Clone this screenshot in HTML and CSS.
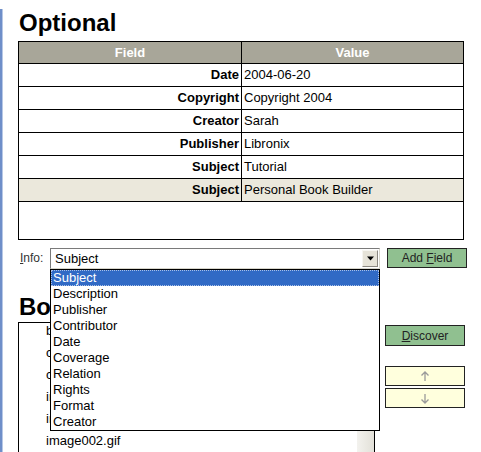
FILE: index.html
```html
<!DOCTYPE html>
<html>
<head>
<meta charset="utf-8">
<title>Optional</title>
<link rel="stylesheet" href="styles.css">
</head>
<body>
<div class="page">
  <h1 class="title">Optional</h1>
  <table class="meta">
    <thead>
      <tr><th class="col-field">Field</th><th class="col-value">Value</th></tr>
    </thead>
    <tbody>
      <tr><td class="f">Date</td><td class="v">2004-06-20</td></tr>
      <tr><td class="f">Copyright</td><td class="v">Copyright 2004</td></tr>
      <tr><td class="f">Creator</td><td class="v">Sarah</td></tr>
      <tr><td class="f">Publisher</td><td class="v">Libronix</td></tr>
      <tr><td class="f">Subject</td><td class="v">Tutorial</td></tr>
      <tr class="current"><td class="f">Subject</td><td class="v">Personal Book Builder</td></tr>
      <tr class="spacer"><td colspan="2"></td></tr>
    </tbody>
  </table>

  <div class="info-row">
    <label class="info-label"><u>I</u>nfo:</label>
    <div class="combo">
      <div class="combo-box">
        <span class="combo-text">Subject</span>
        <span class="combo-btn"><svg width="9" height="5" viewBox="0 0 9 5"><path d="M1 0.5 H8 L4.5 4.5 Z" fill="#000"/></svg></span>
      </div>
      <ul class="combo-list">
        <li class="hl">Subject</li>
        <li>Description</li>
        <li>Publisher</li>
        <li>Contributor</li>
        <li>Date</li>
        <li>Coverage</li>
        <li>Relation</li>
        <li>Rights</li>
        <li>Format</li>
        <li>Creator</li>
      </ul>
    </div>
    <button class="btn green add"><span>Add <u>F</u>ield</span></button>
  </div>

  <h2 class="title section">Book Files</h2>
  <div class="files-row">
    <div class="listbox">
      <ul class="files">
        <li>book.htm</li>
        <li>contents.htm</li>
        <li>chapter1.htm</li>
        <li>image000.gif</li>
        <li>image001.gif</li>
        <li>image002.gif</li>
      </ul>
      <div class="scroll"></div>
    </div>
    <div class="side">
      <button class="btn green discover"><span><u>D</u>iscover</span></button>
      <button class="btn yellow up"><svg width="10" height="11" viewBox="0 0 10 11"><path d="M5 1 V10 M1.5 4.5 L5 1 L8.5 4.5" fill="none" stroke="#9a9a9a" stroke-width="1.3"/></svg></button>
      <button class="btn yellow down"><svg width="10" height="11" viewBox="0 0 10 11"><path d="M5 1 V10 M1.5 6.5 L5 10 L8.5 6.5" fill="none" stroke="#9a9a9a" stroke-width="1.3"/></svg></button>
    </div>
  </div>
</div>
</body>
</html>
```

FILE: styles.css
```css
html, body {
  margin: 0;
  padding: 0;
  background: #fff;
}
body {
  width: 481px;
  height: 452px;
  overflow: hidden;
  font-family: "Liberation Sans", Arial, sans-serif;
  font-size: 13px;
  color: #000;
}
.page {
  height: 452px;
  border-left: 2px solid #6f8fc9;
  box-shadow: inset 1px 0 0 #b7c8e6;
  padding-left: 16px;
  box-sizing: border-box;
}
.title {
  font-size: 24px;
  font-weight: bold;
  line-height: 28px;
  margin: 9px 0 4px 1px;
}
.meta {
  border-collapse: collapse;
  width: 446px;
  table-layout: fixed;
}
.meta th, .meta td {
  border: 1px solid #000;
  padding: 0 2px;
  height: 22px;
  line-height: 18px;
  white-space: nowrap;
  overflow: hidden;
}
.meta th {
  background: #a8a699;
  color: #fff;
  font-weight: bold;
  text-align: center;
  height: 21px;
}
.col-field { width: 218px; }
.meta td.f {
  font-weight: bold;
  text-align: right;
}
.meta td.v {
  text-align: left;
}
.meta tr.current td {
  background: #ebe8dc;
}
.meta tr.spacer td {
  height: 37px;
}
.info-row {
  display: flex;
  align-items: flex-start;
  margin-top: 8px;
}
.info-label {
  font-size: 12px;
  color: #333;
  width: 30px;
  padding-left: 2px;
  line-height: 20px;
}
.combo {
  position: relative;
  width: 330px;
}
.combo-box {
  height: 21px;
  box-sizing: border-box;
  border-top: 1px solid #7a7a7a;
  border-left: 1px solid #7a7a7a;
  border-right: 1px solid #d8d6cc;
  border-bottom: 1px solid #d8d6cc;
  display: flex;
  align-items: center;
  justify-content: space-between;
  background: #fff;
}
.combo-text {
  padding-left: 4px;
  line-height: 18px;
}
.combo-btn {
  width: 16px;
  height: 17px;
  margin-right: 1px;
  background: #e6e3d8;
  border: 1px solid #f6f5f0;
  border-right-color: #8a8780;
  border-bottom-color: #8a8780;
  box-sizing: border-box;
  display: flex;
  align-items: center;
  justify-content: center;
}
.combo-list {
  position: absolute;
  top: 21px;
  left: 0;
  width: 330px;
  box-sizing: border-box;
  margin: 0;
  padding: 0;
  list-style: none;
  background: #fff;
  border: 1px solid #000;
  z-index: 5;
}
.combo-list li {
  height: 16px;
  line-height: 16px;
  padding-left: 2px;
  white-space: nowrap;
}
.combo-list li.hl {
  background: #316ac5;
  color: #fff;
  outline: 1px dotted #a9c0e8;
  outline-offset: -1px;
}
.btn {
  font-family: "Liberation Sans", Arial, sans-serif;
  font-size: 12px;
  color: #222;
  border: 1px solid #222;
  padding: 0;
  margin: 0;
  box-sizing: border-box;
  width: 80px;
  display: flex;
  align-items: center;
  justify-content: center;
}
.btn.green {
  background: #90c090;
}
.btn.yellow {
  background: #ffffdd;
  height: 20px;
}
.add {
  height: 20px;
  margin-left: 7px;
}
.section {
  margin: 24px 0 1px 1px;
}
.files-row {
  display: flex;
  align-items: flex-start;
}
.listbox {
  position: relative;
  width: 357px;
  height: 140px;
  box-sizing: border-box;
  border: 1px solid #000;
  display: flex;
}
.files {
  flex: 1;
  margin: 0;
  padding: 0 0 0 27px;
  list-style: none;
}
.files li {
  height: 22px;
  line-height: 16px;
  white-space: nowrap;
}
.scroll {
  width: 17px;
  background: linear-gradient(to right, #f3f2ee, #e2e0d8);
}
.side {
  display: flex;
  flex-direction: column;
  margin-left: 10px;
  padding-top: 3px;
}
.discover {
  height: 21px;
}
.up {
  margin-top: 20px;
}
.down {
  margin-top: 2px;
}
```
